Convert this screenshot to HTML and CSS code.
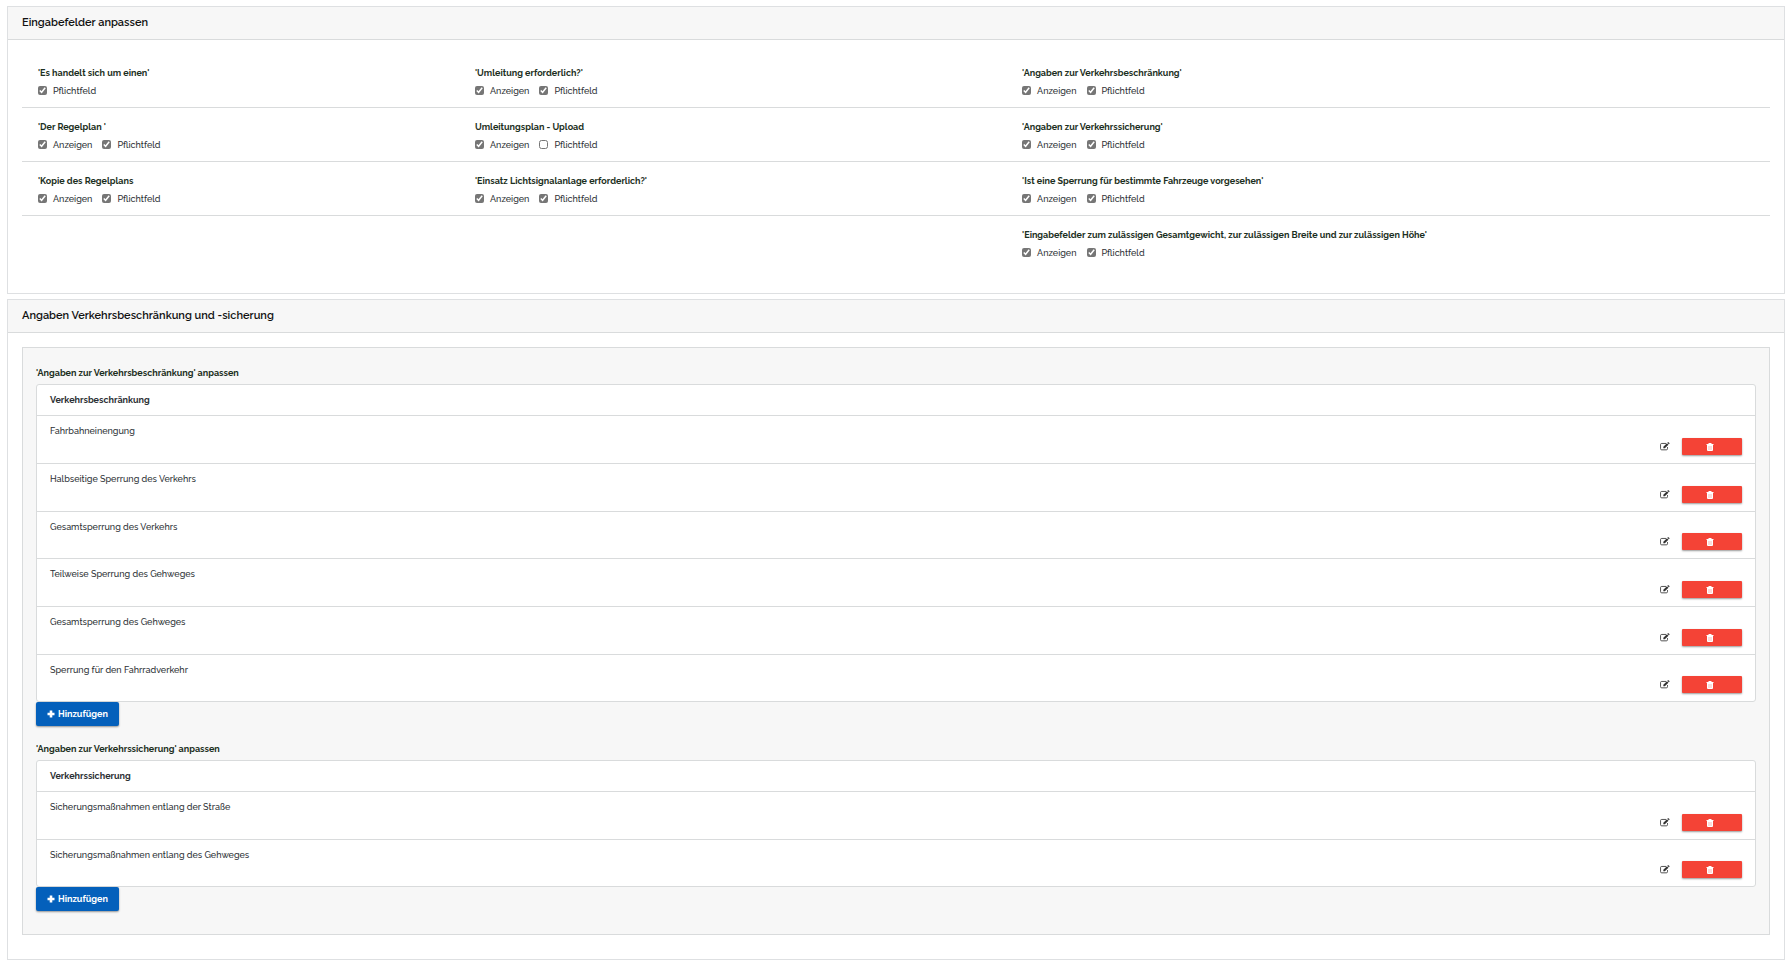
FILE: index.html
```html
<!DOCTYPE html>
<html lang="de">
<head>
    <meta charset="UTF-8">
    <meta name="viewport" content="width=device-width, initial-scale=1.0">
    <title>Eingabefelder anpassen</title>
    <link rel="stylesheet" href="styles.css">
</head>
<body>
    <!-- Icons used by the buttons -->
    <svg class="icon-defs" width="0" height="0" aria-hidden="true">
        <symbol id="icon-edit" viewBox="0 0 18 16">
            <path d="M13.500 9V12a2 2 0 0 1-2 2H3a2 2 0 0 1-2-2V4.500a2 2 0 0 1 2-2H11" fill="none" stroke="currentColor" stroke-width="1.500"/>
            <path d="M6 8.500V11.300h2.700L15.200 4.800 12.500 2.100zM13.200 1.400l1-1a.9.9 0 0 1 1.200 0l1.500 1.500a.9.9 0 0 1 0 1.200l-1 1z" fill="currentColor"/>
        </symbol>
        <symbol id="icon-trash" viewBox="0 0 16 16">
            <path d="M5 0h6v2h4v2H1V2h4z" fill="currentColor"/>
            <path d="M2 4h12v10a2 2 0 0 1-2 2H4a2 2 0 0 1-2-2z" fill="currentColor"/>
            <path d="M5.500 6v8M8 6v8M10.500 6v8" fill="none" stroke="#f44336" stroke-opacity="0.5" stroke-width="1"/>
        </symbol>
        <symbol id="icon-plus" viewBox="0 0 8 8">
            <path d="M2.700 0.500h2.600v2.200h2.200v2.600H5.300v2.200H2.700V5.300H0.500V2.700h2.200z" fill="currentColor"/>
        </symbol>
    </svg>

    <section class="card">
        <h2 class="card-header">Eingabefelder anpassen</h2>
        <div class="card-body fields">
            <div class="field-row">
                <div class="field">
                    <h3>'Es handelt sich um einen'</h3>
                    <div class="options">
                        <label><input type="checkbox" checked>Pflichtfeld</label>
                    </div>
                </div>
                <div class="field">
                    <h3>'Umleitung erforderlich?'</h3>
                    <div class="options">
                        <label><input type="checkbox" checked>Anzeigen</label>
                        <label><input type="checkbox" checked>Pflichtfeld</label>
                    </div>
                </div>
                <div class="field">
                    <h3>'Angaben zur Verkehrsbeschränkung'</h3>
                    <div class="options">
                        <label><input type="checkbox" checked>Anzeigen</label>
                        <label><input type="checkbox" checked>Pflichtfeld</label>
                    </div>
                </div>
            </div>
            <div class="field-row">
                <div class="field">
                    <h3>'Der Regelplan '</h3>
                    <div class="options">
                        <label><input type="checkbox" checked>Anzeigen</label>
                        <label><input type="checkbox" checked>Pflichtfeld</label>
                    </div>
                </div>
                <div class="field">
                    <h3>Umleitungsplan - Upload</h3>
                    <div class="options">
                        <label><input type="checkbox" checked>Anzeigen</label>
                        <label><input type="checkbox">Pflichtfeld</label>
                    </div>
                </div>
                <div class="field">
                    <h3>'Angaben zur Verkehrssicherung'</h3>
                    <div class="options">
                        <label><input type="checkbox" checked>Anzeigen</label>
                        <label><input type="checkbox" checked>Pflichtfeld</label>
                    </div>
                </div>
            </div>
            <div class="field-row">
                <div class="field">
                    <h3>'Kopie des Regelplans</h3>
                    <div class="options">
                        <label><input type="checkbox" checked>Anzeigen</label>
                        <label><input type="checkbox" checked>Pflichtfeld</label>
                    </div>
                </div>
                <div class="field">
                    <h3>'Einsatz Lichtsignalanlage erforderlich?'</h3>
                    <div class="options">
                        <label><input type="checkbox" checked>Anzeigen</label>
                        <label><input type="checkbox" checked>Pflichtfeld</label>
                    </div>
                </div>
                <div class="field">
                    <h3>'Ist eine Sperrung für bestimmte Fahrzeuge vorgesehen'</h3>
                    <div class="options">
                        <label><input type="checkbox" checked>Anzeigen</label>
                        <label><input type="checkbox" checked>Pflichtfeld</label>
                    </div>
                </div>
            </div>
            <div class="field-row">
                <div class="field"></div>
                <div class="field"></div>
                <div class="field">
                    <h3>'Eingabefelder zum zulässigen Gesamtgewicht, zur zulässigen Breite und zur zulässigen Höhe'</h3>
                    <div class="options">
                        <label><input type="checkbox" checked>Anzeigen</label>
                        <label><input type="checkbox" checked>Pflichtfeld</label>
                    </div>
                </div>
            </div>
        </div>
    </section>

    <section class="card">
        <h2 class="card-header">Angaben Verkehrsbeschränkung und -sicherung</h2>
        <div class="card-body lists">
            <div class="panel">
                <div class="group">
                    <h3>'Angaben zur Verkehrsbeschränkung' anpassen</h3>
                    <table class="list">
                        <thead>
                            <tr><th colspan="2">Verkehrsbeschränkung</th></tr>
                        </thead>
                        <tbody>
                            <tr>
                                <td>Fahrbahneinengung</td>
                                <td class="actions">
                                    <button type="button" class="btn-edit" aria-label="Bearbeiten"><svg><use href="#icon-edit"/></svg></button>
                                    <button type="button" class="btn-delete" aria-label="Löschen"><svg><use href="#icon-trash"/></svg></button>
                                </td>
                            </tr>
                            <tr>
                                <td>Halbseitige Sperrung des Verkehrs</td>
                                <td class="actions">
                                    <button type="button" class="btn-edit" aria-label="Bearbeiten"><svg><use href="#icon-edit"/></svg></button>
                                    <button type="button" class="btn-delete" aria-label="Löschen"><svg><use href="#icon-trash"/></svg></button>
                                </td>
                            </tr>
                            <tr>
                                <td>Gesamtsperrung des Verkehrs</td>
                                <td class="actions">
                                    <button type="button" class="btn-edit" aria-label="Bearbeiten"><svg><use href="#icon-edit"/></svg></button>
                                    <button type="button" class="btn-delete" aria-label="Löschen"><svg><use href="#icon-trash"/></svg></button>
                                </td>
                            </tr>
                            <tr>
                                <td>Teilweise Sperrung des Gehweges</td>
                                <td class="actions">
                                    <button type="button" class="btn-edit" aria-label="Bearbeiten"><svg><use href="#icon-edit"/></svg></button>
                                    <button type="button" class="btn-delete" aria-label="Löschen"><svg><use href="#icon-trash"/></svg></button>
                                </td>
                            </tr>
                            <tr>
                                <td>Gesamtsperrung des Gehweges</td>
                                <td class="actions">
                                    <button type="button" class="btn-edit" aria-label="Bearbeiten"><svg><use href="#icon-edit"/></svg></button>
                                    <button type="button" class="btn-delete" aria-label="Löschen"><svg><use href="#icon-trash"/></svg></button>
                                </td>
                            </tr>
                            <tr>
                                <td>Sperrung für den Fahrradverkehr</td>
                                <td class="actions">
                                    <button type="button" class="btn-edit" aria-label="Bearbeiten"><svg><use href="#icon-edit"/></svg></button>
                                    <button type="button" class="btn-delete" aria-label="Löschen"><svg><use href="#icon-trash"/></svg></button>
                                </td>
                            </tr>
                        </tbody>
                    </table>
                    <button type="button" class="btn-add"><svg><use href="#icon-plus"/></svg>Hinzufügen</button>
                </div>

                <div class="group">
                    <h3>'Angaben zur Verkehrssicherung' anpassen</h3>
                    <table class="list">
                        <thead>
                            <tr><th colspan="2">Verkehrssicherung</th></tr>
                        </thead>
                        <tbody>
                            <tr>
                                <td>Sicherungsmaßnahmen entlang der Straße</td>
                                <td class="actions">
                                    <button type="button" class="btn-edit" aria-label="Bearbeiten"><svg><use href="#icon-edit"/></svg></button>
                                    <button type="button" class="btn-delete" aria-label="Löschen"><svg><use href="#icon-trash"/></svg></button>
                                </td>
                            </tr>
                            <tr>
                                <td>Sicherungsmaßnahmen entlang des Gehweges</td>
                                <td class="actions">
                                    <button type="button" class="btn-edit" aria-label="Bearbeiten"><svg><use href="#icon-edit"/></svg></button>
                                    <button type="button" class="btn-delete" aria-label="Löschen"><svg><use href="#icon-trash"/></svg></button>
                                </td>
                            </tr>
                        </tbody>
                    </table>
                    <button type="button" class="btn-add"><svg><use href="#icon-plus"/></svg>Hinzufügen</button>
                </div>
            </div>
        </div>
    </section>
</body>
</html>
```
FILE: styles.css
```css
* {
    box-sizing: border-box;
}
body {
    margin: 0;
    padding: 6px 4px 5px 7px;
    background: #fff;
    color: #2c3034;
    font-family: Raleway, "Open Sans", sans-serif;
    font-size: 9px;
    font-weight: 500;
    line-height: 14px;
}
h2,
h3 {
    margin: 0;
}
h3 {
    color: #1c2f22;
    font-size: 9px;
    font-weight: 700;
    line-height: 14px;
}
.icon-defs {
    position: absolute;
}
.card {
    border: 1px solid #dee0e2;
    margin-bottom: 5px;
}
.card:last-child {
    margin-bottom: 0;
}
.card-header {
    padding: 6px 14px;
    background: #f7f7f7;
    border-bottom: 1px solid #d9dbdc;
    color: #111;
    font-size: 11px;
    font-weight: 600;
    line-height: 20px;
}

/* Checkbox grid */
.fields {
    padding: 14px 14px 24px;
}
.field-row {
    display: grid;
    grid-template-columns: 250fr 313fr 437fr;
    border-bottom: 1px solid #d9dbdc;
}
.field-row:last-child {
    border-bottom: none;
}
.field {
    padding: 12px 16px 9px;
}
.options {
    display: flex;
    gap: 10px;
    margin-top: 4px;
}
.options label {
    display: flex;
    align-items: center;
    gap: 6px;
}
.options input {
    width: 9px;
    height: 9px;
    margin: 0 0 2px;
    accent-color: #767676;
}

/* Editable lists */
.lists {
    padding: 14px 14px 24px;
}
.panel {
    padding: 18px 13px 23px;
    background: #f7f7f7;
    border: 1px solid #d9dbdc;
}
.group + .group {
    margin-top: 16px;
}
.group h3 {
    margin-bottom: 4px;
}
.list {
    width: 100%;
    background: #fff;
    border: 1px solid #d9dbdc;
    border-radius: 3px;
    border-spacing: 0;
}
.list th {
    padding: 8px 13px;
    text-align: left;
    font-weight: 700;
}
.list td {
    height: 48px;
    padding: 8px 13px;
    border-top: 1px solid #d9dbdc;
    vertical-align: top;
}
.list tr:nth-child(3n) td,
.list tr:last-child td {
    height: 47px;
}
.list .actions {
    width: 120px;
    text-align: right;
    vertical-align: bottom;
    white-space: nowrap;
    font-size: 0;
}
button {
    display: inline-flex;
    align-items: center;
    justify-content: center;
    padding: 0;
    border: none;
    font-family: inherit;
    vertical-align: bottom;
    cursor: pointer;
}
.btn-edit {
    height: 17px;
    margin-right: 12px;
    background: none;
    color: #333;
}
.btn-edit svg {
    width: 10px;
    height: 9px;
}
.btn-delete {
    width: 60px;
    height: 17px;
    padding-right: 4px;
    background: #f44336;
    border-radius: 1px;
    color: #fff;
    box-shadow: 0 1px 2px rgba(0, 0, 0, 0.4);
}
.btn-delete svg {
    width: 8px;
    height: 8px;
}
.btn-add {
    display: flex;
    gap: 3px;
    height: 24px;
    padding: 0 11px;
    background: #0460bb;
    border-radius: 2px;
    color: #fff;
    font-size: 9px;
    font-weight: 700;
    box-shadow: 0 1px 2px rgba(0, 0, 0, 0.4);
}
.btn-add svg {
    width: 8px;
    height: 8px;
}
```
